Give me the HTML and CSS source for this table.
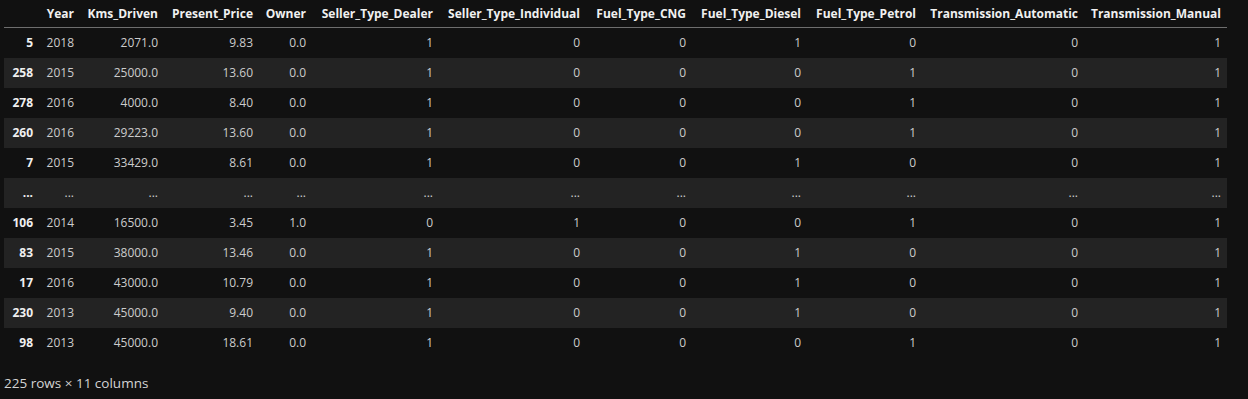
FILE: index.html
```html
<!DOCTYPE html>
<html>
<head>
<meta charset="utf-8">
<link rel="stylesheet" href="styles.css">
</head>
<body>
<div class="output">
  <table class="df">
    <colgroup>
      <col class="c-idx"><col class="c-year"><col class="c-kms"><col class="c-pp"><col class="c-own">
      <col class="c-dealer"><col class="c-indiv"><col class="c-cng"><col class="c-diesel"><col class="c-petrol">
      <col class="c-auto"><col class="c-manual">
    </colgroup>
    <thead>
      <tr>
        <th></th><th>Year</th><th>Kms_Driven</th><th>Present_Price</th><th>Owner</th><th>Seller_Type_Dealer</th><th>Seller_Type_Individual</th><th>Fuel_Type_CNG</th><th>Fuel_Type_Diesel</th><th>Fuel_Type_Petrol</th><th>Transmission_Automatic</th><th>Transmission_Manual</th>
      </tr>
    </thead>
    <tbody>
      <tr><th>5</th><td>2018</td><td>2071.0</td><td>9.83</td><td>0.0</td><td>1</td><td>0</td><td>0</td><td>1</td><td>0</td><td>0</td><td>1</td></tr>
      <tr><th>258</th><td>2015</td><td>25000.0</td><td>13.60</td><td>0.0</td><td>1</td><td>0</td><td>0</td><td>0</td><td>1</td><td>0</td><td>1</td></tr>
      <tr><th>278</th><td>2016</td><td>4000.0</td><td>8.40</td><td>0.0</td><td>1</td><td>0</td><td>0</td><td>0</td><td>1</td><td>0</td><td>1</td></tr>
      <tr><th>260</th><td>2016</td><td>29223.0</td><td>13.60</td><td>0.0</td><td>1</td><td>0</td><td>0</td><td>0</td><td>1</td><td>0</td><td>1</td></tr>
      <tr><th>7</th><td>2015</td><td>33429.0</td><td>8.61</td><td>0.0</td><td>1</td><td>0</td><td>0</td><td>1</td><td>0</td><td>0</td><td>1</td></tr>
      <tr><th>...</th><td>...</td><td>...</td><td>...</td><td>...</td><td>...</td><td>...</td><td>...</td><td>...</td><td>...</td><td>...</td><td>...</td></tr>
      <tr><th>106</th><td>2014</td><td>16500.0</td><td>3.45</td><td>1.0</td><td>0</td><td>1</td><td>0</td><td>0</td><td>1</td><td>0</td><td>1</td></tr>
      <tr><th>83</th><td>2015</td><td>38000.0</td><td>13.46</td><td>0.0</td><td>1</td><td>0</td><td>0</td><td>1</td><td>0</td><td>0</td><td>1</td></tr>
      <tr><th>17</th><td>2016</td><td>43000.0</td><td>10.79</td><td>0.0</td><td>1</td><td>0</td><td>0</td><td>1</td><td>0</td><td>0</td><td>1</td></tr>
      <tr><th>230</th><td>2013</td><td>45000.0</td><td>9.40</td><td>0.0</td><td>1</td><td>0</td><td>0</td><td>1</td><td>0</td><td>0</td><td>1</td></tr>
      <tr><th>98</th><td>2013</td><td>45000.0</td><td>18.61</td><td>0.0</td><td>1</td><td>0</td><td>0</td><td>0</td><td>1</td><td>0</td><td>1</td></tr>
    </tbody>
  </table>
  <p class="shape">225 rows × 11 columns</p>
</div>
</body>
</html>
```

FILE: styles.css
```css
html, body {
  margin: 0;
  padding: 0;
  background: #111111;
}

body {
  font-family: "Open Sans", "Noto Sans", "Liberation Sans", sans-serif;
  font-size: 12px;
  color: #cccccc;
}

.output {
  padding: 0 4px;
}

.df {
  border-collapse: collapse;
  table-layout: fixed;
  width: 1223px;
}

.c-idx { width: 35px; }
.c-year { width: 41px; }
.c-kms { width: 84px; }
.c-pp { width: 95px; }
.c-own { width: 53px; }
.c-dealer { width: 127px; }
.c-indiv { width: 147px; }
.c-cng { width: 106px; }
.c-diesel { width: 115px; }
.c-petrol { width: 115px; }
.c-auto { width: 162px; }
.c-manual { width: 143px; }

.df th,
.df td {
  padding: 0 6px;
  text-align: right;
  white-space: nowrap;
  overflow: visible;
}

.df thead th {
  height: 27px;
  font-weight: 700;
  color: #f0f0f0;
  border-bottom: 1px solid #6e6e6e;
  vertical-align: middle;
}

.df tbody tr {
  height: 30px;
}

.df tbody th {
  font-weight: 700;
  color: #f0f0f0;
}

.df tbody tr:nth-child(even) {
  background: #232323;
}

.shape {
  margin: 16px 0 0;
  font-size: 13.5px;
  line-height: 18px;
  color: #d4d4d4;
}
```
